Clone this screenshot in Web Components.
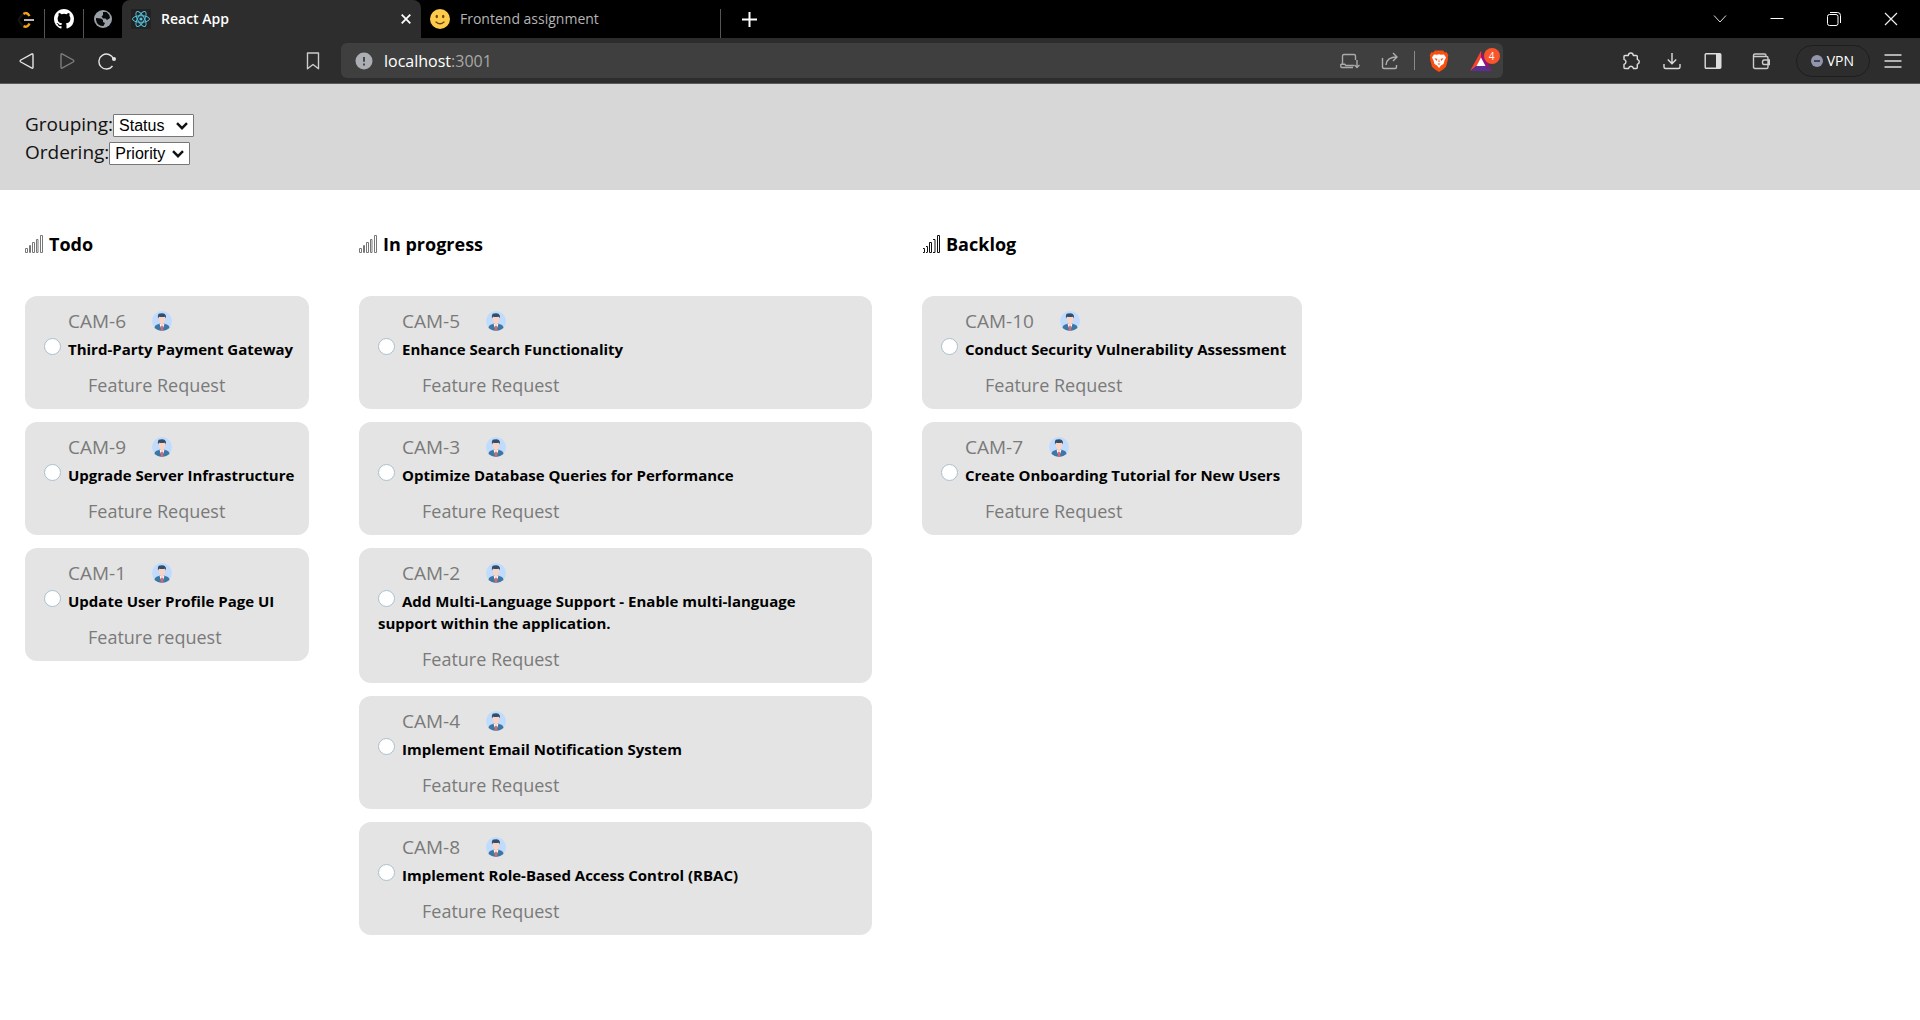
<!DOCTYPE html>
<html lang="en">
<head>
<meta charset="utf-8">
<title>React App</title>
<style>
  body { margin: 0; background: #fff; font-family: "Open Sans", "Noto Sans", sans-serif; color: #000; }
</style>
</head>
<body>
<browser-tabs></browser-tabs>
<browser-toolbar></browser-toolbar>
<board-header></board-header>
<kanban-board></kanban-board>

<script>
const shadow = (el, html) => { el.attachShadow({ mode: "open" }).innerHTML = html; };

const ICONS = {
  leetcode: '<svg viewBox="0 0 20 20" width="20" height="20" fill="none"><path d="M9 2L2.500 9q-1.500 2 0 4L6 17" stroke="#141414" stroke-width="2"/><path d="M6.500 5Q10 2.500 12.500 7M6.500 17.200Q10.500 19 12.500 14.500" stroke="#f5a21b" stroke-width="2.400"/><path d="M7 11h10" stroke="#b8b8b8" stroke-width="2"/></svg>',
  github: '<svg viewBox="0 0 16 16" width="20" height="20" fill="#fff"><path d="M8 0C3.580 0 0 3.580 0 8c0 3.540 2.290 6.530 5.470 7.590.4.070.55-.17.55-.38 0-.19-.01-.82-.01-1.490-2.010.37-2.530-.49-2.690-.94-.09-.23-.48-.94-.82-1.130-.28-.15-.68-.52-.01-.53.63-.01 1.080.58 1.230.82.72 1.210 1.870.87 2.330.66.07-.52.28-.87.51-1.070-1.780-.2-3.640-.89-3.640-3.950 0-.87.31-1.590.82-2.150-.08-.2-.36-1.020.08-2.120 0 0 .67-.21 2.200.82a7.600 7.600 0 0 1 4 0c1.530-1.040 2.200-.82 2.200-.82.44 1.100.16 1.920.08 2.120.51.56.82 1.270.82 2.150 0 3.070-1.870 3.750-3.650 3.950.29.25.54.73.54 1.480 0 1.070-.01 1.930-.01 2.200 0 .21.15.46.55.38A8.010 8.010 0 0 0 16 8c0-4.420-3.580-8-8-8z"/></svg>',
  globe: '<svg viewBox="0 0 18 18" width="18" height="18"><circle cx="9" cy="9" r="9" fill="#9aa0a8"/><path d="M2 8l5 .500 2 1.500v2l2 1-1.500 3Q3 16 2 10zM9 2h3.500q3 2 3.500 6l-3 2-1.500-1.500H9L7.500 6.500 9 5z" fill="#0a0a0a"/></svg>',
  react: '<svg viewBox="0 0 20 20" width="20" height="20" fill="none" stroke="#53c1de" stroke-width="1"><path d="M0 0h20v20H0z" fill="#222" stroke="none"/><ellipse cx="10" cy="10" rx="8.500" ry="3.300"/><ellipse cx="10" cy="10" rx="8.500" ry="3.300" transform="rotate(60 10 10)"/><ellipse cx="10" cy="10" rx="8.500" ry="3.300" transform="rotate(120 10 10)"/><circle cx="10" cy="10" r="1.600" fill="#53c1de" stroke="none"/></svg>',
  smile: '<svg viewBox="0 0 20 20" width="20" height="20"><circle cx="10" cy="10" r="10" fill="#fdcb4b"/><ellipse cx="6.800" cy="7.500" rx="1.200" ry="1.800" fill="#6b4410"/><ellipse cx="13.200" cy="7.500" rx="1.200" ry="1.800" fill="#6b4410"/><path d="M6 13q4 3.500 8 0" stroke="#6b4410" stroke-width="1.300" fill="none" stroke-linecap="round"/></svg>',
  x: '<svg viewBox="0 0 10 10" width="10" height="10" stroke="#fff" stroke-width="1.800"><path d="M.7.7l8.600 8.600M9.300.7L.7 9.300"/></svg>',
  plus: '<svg viewBox="0 0 15 15" width="15" height="15" stroke="#fff" stroke-width="2"><path d="M7.500 0v15M0 7.500h15"/></svg>',
  chevron: '<svg viewBox="0 0 14 14" width="14" height="14" fill="none" stroke="#ddd"><path d="M1 3.500l6 6.500 6-6.500"/></svg>',
  minimize: '<svg viewBox="0 0 14 14" width="14" height="14" stroke="#fff"><path d="M.5 6.500h13"/></svg>',
  restore: '<svg viewBox="0 0 14 14" width="14" height="14" fill="none" stroke="#fff"><rect x=".5" y="2.500" width="10.500" height="11" rx="2"/><path d="M3 .5h7.500q3 0 3 3V11"/></svg>',
  close: '<svg viewBox="0 0 14 14" width="14" height="14" stroke="#eee" stroke-width="1.200"><path d="M1 1l12 12M13 1L1 13"/></svg>',
  back: '<svg viewBox="0 0 18 18" width="18" height="18" fill="none" stroke="#e4e4e4" stroke-width="1.400" stroke-linejoin="round"><path d="M14 1.800q1 0 1 1v12.400q0 1.500-1.500.700L2.800 10q-1.300-1 0-2z"/></svg>',
  forward: '<svg viewBox="0 0 18 18" width="18" height="18" fill="none" stroke="#7d7d7d" stroke-width="1.400" stroke-linejoin="round"><path d="M4 1.800q-1 0-1 1v12.400q0 1.500 1.500.700L15.200 10q1.300-1 0-2z"/></svg>',
  reload: '<svg viewBox="0 0 18 18" width="18" height="18" fill="none" stroke="#e4e4e4" stroke-width="1.400"><path d="M15.500 7A7.500 7.500 0 1 0 14.500 14"/><circle cx="16" cy="7" r="2" fill="#e4e4e4" stroke="none"/></svg>',
  bookmark: '<svg viewBox="0 0 18 18" width="18" height="18" fill="none" stroke="#ccc" stroke-width="1.400" stroke-linejoin="round"><path d="M3.500 1h11v15.800L9 12.500l-5.500 4.300z"/></svg>',
  info: '<svg viewBox="0 0 18 18" width="18" height="18"><circle cx="9" cy="9" r="8.500" fill="#abafb3"/><path d="M9 5v4.800M9 11.400v2" stroke="#3d3d3d" stroke-width="1.800"/></svg>',
  install: '<svg viewBox="0 0 20 18" width="20" height="18" fill="none" stroke="#aaa" stroke-width="1.400"><path d="M15.500 8V4q0-1.500-1.500-1.500H4Q2.500 2.500 2.500 4v8.500M.8 12.300h4l1 1.200H14M.8 12v2.500q0 1 1 1H13M17 8v7M14.500 13L17 15.500l2.500-2.500"/></svg>',
  share: '<svg viewBox="0 0 18 18" width="18" height="18" fill="none" stroke="#b0b0b0" stroke-width="1.400"><path d="M1.500 6v9q0 1.500 1.500 1.500h11q1.500 0 1.500-1.500v-2M5 13q.5-8 11-8M12 1l4 4-4 4"/></svg>',
  brave: '<svg viewBox="0 0 20 22" width="20" height="22"><path d="M6 .5h8L15.800 2.500l2-.3 1.500 3.300-.6 1.700.3 2-2 7.500-3 2.800L10 22l-4-2.500-3-2.800L1 9.200l.3-2L.7 5.500l1.500-3.300 2 .3z" fill="#fb4f10"/><path d="M5 4.500l3 .3 2-.5 2 .5 3-.3 2 3-1.500 3-1 3.500-2.500 1.500L10 18l-2-2.500L5.500 14l-1-3.500L3 7.500z" fill="#fff"/><path d="M5.500 8l3 1-1 2zM14.500 8l-3 1 1 2zM8.500 13.500h3L10 15zM10 9l.7 3H9.300z" fill="#fb4f10"/></svg>',
  bat: '<svg viewBox="0 0 22 20" width="22" height="20"><path d="M11 0l3.500 7L11 7 7 14.500 0 20z" fill="#f9432a"/><path d="M11 0l11 20-7.500-5.500L11 7z" fill="#95127e"/><path d="M0 20h22l-7.500-5.500h-7z" fill="#5c3092"/><path d="M11 6.500l4.500 8.500h-9z" fill="#fff"/></svg>',
  puzzle: '<svg viewBox="0 0 18 18" width="18" height="18" fill="none" stroke="#ddd" stroke-width="1.400" stroke-linejoin="round"><path d="M3 3.500h3.300Q6.500 1 8.800 1t2.500 2.500h3q1 0 1 1V7.300Q17.300 8 17.300 9.800T15.300 12.300V15.500q0 1-1 1h-2.800Q11 14.300 9 14.300T6.500 16.500H3q-1 0-1-1v-3.200q2-.6 2-2.500T2 7.300V4.500q0-1 1-1z"/></svg>',
  download: '<svg viewBox="0 0 18 18" width="18" height="18" fill="none" stroke="#ddd" stroke-width="1.400"><path d="M9 1v10.500M4.800 7.500L9 11.700l4.200-4.200M1 12v3q0 1.500 1.500 1.500h13q1.500 0 1.500-1.500v-3"/></svg>',
  sidebar: '<svg viewBox="0 0 18 18" width="18" height="18"><rect x="1.200" y="1.700" width="15.600" height="14.600" rx="1" fill="none" stroke="#ddd" stroke-width="1.400"/><path d="M12 2h5v14h-5z" fill="#ddd"/></svg>',
  wallet: '<svg viewBox="0 0 18 18" width="18" height="18" fill="none" stroke="#ccc" stroke-width="1.400"><path d="M1.500 4.500h13q1.500 0 1.500 1.500v9q0 1.500-1.500 1.500H3Q1.500 16.500 1.500 15V3.500q0-1.500 1.500-1.500h9.500q1.500 0 1.500 1.500v1M17.300 8H12q-1.500 0-1.500 2.200T12 12.500h5.300z"/></svg>',
  vpn: '<svg viewBox="0 0 12 12" width="12" height="12"><circle cx="6" cy="6" r="6" fill="#9296ad"/><path d="M3 6h6" stroke="#2b2b2b" stroke-width="1.500"/></svg>',
  menu: '<svg viewBox="0 0 18 18" width="18" height="18" stroke="#ddd" stroke-width="1.400"><path d="M.5 3h17M.5 9h17M.5 15h17"/></svg>',
  bars: '<svg viewBox="0 0 18 18" width="18" height="18" fill="none" stroke="currentColor" stroke-width="1"><path d="M.5 13.500h2v4h-2zM4.500 10.500h1v7h-1zM7.500 7.500h2v10h-2zM11.500 4.500h1.500v13h-1.500zM15.500.5h2v17h-2z"/></svg>',
  barsSharp: '<svg viewBox="0 0 18 18" width="18" height="18" fill="none" stroke="currentColor" stroke-width="1"><path d="M1 13.500h1.500v4H1M4 11.500h1.500v6M4 17.500h1M7.500 7.500h2v10h-2zM11 4.500h2v13h-2M15.500.5h2v17h-2z"/></svg>',
  avatar: '<svg viewBox="0 0 20 20" width="20" height="20"><circle cx="10" cy="10" r="10" fill="#c0dbfd"/><path d="M2.500 17q.3-3 3.500-3.700L8 12.500h4l2 .8q3.200.7 3.500 3.700Q14 20 10 20t-7.500-3z" fill="#3b78a3"/><path d="M7.500 12.800h5L10 20z" fill="#fff"/><path d="M9.300 14.500h1.400l.8 4L10 20l-1.500-1.500z" fill="#dd6470"/><path d="M6.800 5h6.400v4q-.6 3-1.700 3.500v1L10 14.500 8.500 13.500v-1Q7.400 12 6.800 9z" fill="#fbd3c4"/><path d="M6 7.500Q5.300 2.500 8 2.600q3-.8 4.800.4 1.700 1 1.200 4.500l-1-1.700q-3 .4-6 0z" fill="#2f4f6a"/></svg>'
};

customElements.define("ui-icon", class extends HTMLElement {
  connectedCallback() {
    if (this.shadowRoot) return;
    shadow(this, `<style>:host{display:inline-flex;flex:none}svg{display:block}</style>${ICONS[this.getAttribute("name")]}`);
  }
});

customElements.define("browser-tab", class extends HTMLElement {
  constructor() {
    super();
    shadow(this, `<style>
      :host { display: flex; align-items: center; box-sizing: border-box; flex: 0 1 299px; height: 38px; padding: 0 10px 0 9px; color: #b4b4b4; font-size: 14px; line-height: 20px; }
      :host([active]) { background: #2d2d2d; color: #fff; font-weight: 600; border-radius: 8px 8px 0 0; }
      .name { flex: 1; margin-left: 10px; white-space: nowrap; overflow: hidden; }
    </style><slot name="icon"></slot><span class="name"><slot></slot></span><slot name="close"></slot>`);
  }
});

customElements.define("browser-tabs", class extends HTMLElement {
  constructor() {
    super();
    shadow(this, `<style>
      :host { display: flex; height: 38px; padding-right: 1px; background: #000; }
      button { border: 0; background: none; padding: 0; display: flex; align-items: center; justify-content: center; }
      .pin { width: 38px; }
      .first { padding-left: 10px; width: 44px; }
      hr { margin: 9px 0 0; border: 0; width: 1px; background: #555; }
      .add { width: 56px; }
      .spacer { flex: 1; }
      .win { width: 57px; }
    </style>
    <button class="pin first" aria-label="LeetCode"><ui-icon name="leetcode"></ui-icon></button><hr>
    <button class="pin" aria-label="GitHub"><ui-icon name="github"></ui-icon></button><hr>
    <button class="pin" aria-label="Page"><ui-icon name="globe"></ui-icon></button>
    <browser-tab active><ui-icon slot="icon" name="react"></ui-icon>React App<button slot="close" aria-label="Close tab"><ui-icon name="x"></ui-icon></button></browser-tab>
    <browser-tab><ui-icon slot="icon" name="smile"></ui-icon>Frontend assignment</browser-tab><hr>
    <button class="add" aria-label="New tab"><ui-icon name="plus"></ui-icon></button>
    <span class="spacer"></span>
    <button class="win" aria-label="Search tabs"><ui-icon name="chevron"></ui-icon></button>
    <button class="win" aria-label="Minimize"><ui-icon name="minimize"></ui-icon></button>
    <button class="win" aria-label="Restore"><ui-icon name="restore"></ui-icon></button>
    <button class="win" aria-label="Close"><ui-icon name="close"></ui-icon></button>`);
  }
});

customElements.define("browser-toolbar", class extends HTMLElement {
  constructor() {
    super();
    shadow(this, `<style>
      :host { display: flex; align-items: center; height: 45px; background: #2d2d2d; border-bottom: 1px solid #5c5c5c; color: #fff; }
      button { border: 0; background: none; padding: 0; display: flex; align-items: center; color: inherit; font: inherit; }
      .nav { display: flex; gap: 22px; margin-left: 18px; }
      .mark { margin-left: 188px; }
      .address { flex: 1; box-sizing: border-box; height: 35px; margin-left: 19px; padding: 0 11px 0 14px; display: flex; align-items: center; border-radius: 6px; background: #3f3f3f; }
      .url { flex: 1; margin-left: 11px; font-size: 16px; line-height: 22px; }
      .port { color: #a8a8a8; }
      .actions { display: flex; align-items: center; gap: 21px; }
      hr { margin: 0 -7px 0 -6px; border: 0; width: 1px; height: 19px; background: #8a8a8a; }
      .rewards { position: relative; }
      .badge { position: absolute; left: 14px; top: -3px; width: 16px; height: 16px; border-radius: 8px; background: #fb542b; color: #fff; font-size: 10px; line-height: 16px; text-align: center; }
      .right { display: flex; align-items: center; gap: 23px; margin: 0 18px 0 119px; }
      .wallet { margin-left: 7px; }
      .vpn { height: 32px; padding: 0 15px 0 14px; gap: 4px; border: 1px solid #1e1e1e; border-radius: 16px; font-size: 14px; line-height: 20px; margin: 0 -9px 0 3px; }
    </style>
    <div class="nav">
      <button aria-label="Back"><ui-icon name="back"></ui-icon></button>
      <button aria-label="Forward"><ui-icon name="forward"></ui-icon></button>
      <button aria-label="Reload"><ui-icon name="reload"></ui-icon></button>
    </div>
    <button class="mark" aria-label="Bookmark"><ui-icon name="bookmark"></ui-icon></button>
    <div class="address">
      <ui-icon name="info"></ui-icon>
      <span class="url">localhost<span class="port">:3001</span></span>
      <div class="actions">
        <button aria-label="Install"><ui-icon name="install"></ui-icon></button>
        <button aria-label="Share"><ui-icon name="share"></ui-icon></button>
        <hr>
        <button aria-label="Shields"><ui-icon name="brave"></ui-icon></button>
        <button class="rewards" aria-label="Rewards"><ui-icon name="bat"></ui-icon><span class="badge">4</span></button>
      </div>
    </div>
    <div class="right">
      <button aria-label="Extensions"><ui-icon name="puzzle"></ui-icon></button>
      <button aria-label="Downloads"><ui-icon name="download"></ui-icon></button>
      <button aria-label="Sidebar"><ui-icon name="sidebar"></ui-icon></button>
      <button class="wallet" aria-label="Wallet"><ui-icon name="wallet"></ui-icon></button>
      <button class="vpn"><ui-icon name="vpn"></ui-icon>VPN</button>
      <button aria-label="Menu"><ui-icon name="menu"></ui-icon></button>
    </div>`);
  }
});

customElements.define("board-header", class extends HTMLElement {
  constructor() {
    super();
    shadow(this, `<style>
      :host { display: block; padding: 26px 25px 24px; background: #d7d7d7; }
      div { display: flex; align-items: baseline; height: 28px; font-size: 19px; line-height: 28px; color: #111; }
      select { appearance: none; box-sizing: border-box; width: 81px; height: 23px; padding: 0 0 0 5px; font: 16px "Liberation Sans", Arial, sans-serif; color: #000; border: 1px solid #767676; border-radius: 1px; background: #fff url("data:image/svg+xml,%3Csvg xmlns='http://www.w3.org/2000/svg' viewBox='0 0 12 8' fill='none' stroke='%23111' stroke-width='2.4'%3E%3Cpath d='M1 1.200l5 5 5-5'/%3E%3C/svg%3E") no-repeat right 5px center / 12px 8px; }
    </style>
    <div><label for="grouping">Grouping:</label><select id="grouping"><option>Status</option><option>User</option><option>Priority</option></select></div>
    <div><label for="ordering">Ordering:</label><select id="ordering"><option>Priority</option><option>Title</option></select></div>`);
  }
});

customElements.define("ticket-card", class extends HTMLElement {
  connectedCallback() {
    if (this.shadowRoot) return;
    shadow(this, `<style>
      :host { display: block; padding: 14px 0 13px 19px; border-radius: 12px; background: #e4e4e4; }
      .top { display: flex; align-items: center; gap: 26px; margin-left: 24px; font-size: 19px; }
      .top, .tag { line-height: 22px; color: #7a7a7a; }
      h5 { max-width: 460px; margin: 6px 0 14px; font-size: 15px; line-height: 22px; font-weight: 700; }
      input { appearance: none; box-sizing: border-box; width: 17px; height: 17px; margin: 0 7px 0 0; border: 1px solid #a9c1cd; border-radius: 50%; background: #fff; vertical-align: baseline; }
      .tag { margin-left: 44px; font-size: 18px; }
    </style>
    <div class="top"><span>${this.getAttribute("ticket")}</span><ui-icon name="avatar"></ui-icon></div>
    <h5><input type="radio" id="pick"><label for="pick"><slot></slot></label></h5>
    <div class="tag">${this.getAttribute("tag")}</div>`);
  }
});

customElements.define("board-column", class extends HTMLElement {
  connectedCallback() {
    if (this.shadowRoot) return;
    shadow(this, `<style>
      :host { display: flex; flex-direction: column; gap: 13px; flex: 0 1 var(--basis); min-width: 0; }
      h4 { display: flex; align-items: center; gap: 6px; margin: 0 0 27px; font-size: 18px; line-height: 24px; font-weight: 700; }
      ui-icon { color: var(--bars, #777); }
    </style>
    <h4><ui-icon name="${this.getAttribute("icon") || "bars"}"></ui-icon>${this.getAttribute("name")}</h4><slot></slot>`);
  }
});

customElements.define("kanban-board", class extends HTMLElement {
  constructor() {
    super();
    shadow(this, `<style>
      :host { display: flex; align-items: flex-start; gap: 50px; padding: 42px 25px; }
      .todo { --basis: 284px; }
      .progress { --basis: 513px; }
      .backlog { --basis: 380px; --bars: #111; }
    </style>
    <board-column class="todo" name="Todo">
      <ticket-card ticket="CAM-6" tag="Feature Request">Third-Party Payment Gateway</ticket-card>
      <ticket-card ticket="CAM-9" tag="Feature Request">Upgrade Server Infrastructure</ticket-card>
      <ticket-card ticket="CAM-1" tag="Feature request">Update User Profile Page UI</ticket-card>
    </board-column>
    <board-column class="progress" name="In progress">
      <ticket-card ticket="CAM-5" tag="Feature Request">Enhance Search Functionality</ticket-card>
      <ticket-card ticket="CAM-3" tag="Feature Request">Optimize Database Queries for Performance</ticket-card>
      <ticket-card ticket="CAM-2" tag="Feature Request">Add Multi-Language Support - Enable multi-language support within the application.</ticket-card>
      <ticket-card ticket="CAM-4" tag="Feature Request">Implement Email Notification System</ticket-card>
      <ticket-card ticket="CAM-8" tag="Feature Request">Implement Role-Based Access Control (RBAC)</ticket-card>
    </board-column>
    <board-column class="backlog" name="Backlog" icon="barsSharp">
      <ticket-card ticket="CAM-10" tag="Feature Request">Conduct Security Vulnerability Assessment</ticket-card>
      <ticket-card ticket="CAM-7" tag="Feature Request">Create Onboarding Tutorial for New Users</ticket-card>
    </board-column>`);
  }
});
</script>
</body>
</html>
